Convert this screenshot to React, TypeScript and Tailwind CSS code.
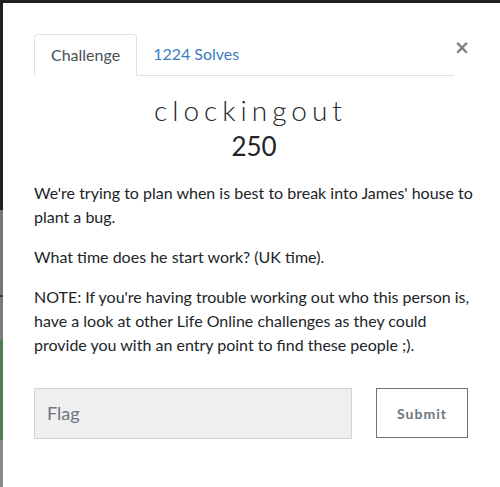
import React from "react";

export default function App() {
  return (
    <div className="flex h-[487px] w-[500px] overflow-hidden bg-[#1d2124]" style={{ fontFamily: "Lato, 'Noto Sans', sans-serif" }}>
      <div className="flex w-[3px] shrink-0 flex-col">
        <div className="h-[210px] bg-[#1d2124]" />
        <div className="h-[85px] bg-[#767676]" />
        <div className="h-[2px] bg-[#3a3a3a]" />
        <div className="h-[43px] bg-[#7a7a7a]" />
        <div className="h-[100px] bg-[#4f7d50]" />
        <div className="flex-1 bg-[#8a8a8a]" />
      </div>
      <div className="flex flex-1 flex-col">
        <div className="h-[3px] bg-[#1d2124]" />
        <div className="flex-1 bg-white pl-[31px] pr-[26px] pt-[31px]">
          <div className="flex items-start pr-[8px]">
            <div className="flex flex-1 border-b border-[#dee2e6]">
              <div className="-mb-px rounded-t-[4px] border border-b-white border-[#dee2e6] bg-white px-4 py-2 text-[16px] leading-[24px] text-[#495057]">
                Challenge
              </div>
              <div className="px-4 py-2 text-[16px] leading-[24px] text-[#3b7dbf]">1224 Solves</div>
            </div>
            <div className="w-[12px] pt-[3px] text-center text-[19px] font-bold leading-[20px] text-[#808080]" style={{ fontFamily: "'DejaVu Sans', sans-serif" }}>
              ×
            </div>
          </div>
          <div className="mt-[16px] pr-[7px] text-center text-[28px] font-light leading-[36px] tracking-[5px] text-[#212529]">
            clockingout
          </div>
          <div className="mt-[1px] text-center text-[26px] leading-[34px] text-[#212529]">250</div>
          <div className="mt-[18px] text-[16px] leading-[24px] text-[#212529]">
            <p className="mb-4">We're trying to plan when is best to break into James' house to plant a bug.</p>
            <p className="mb-4">What time does he start work? (UK time).</p>
            <p className="mb-4">
              NOTE: If you're having trouble working out who this person is, have a look at other Life Online challenges as they could provide you with an entry point to find these people ;).
            </p>
          </div>
          <div className="mt-[31px] flex items-start gap-[24px]">
            <div className="flex h-[51px] w-[318px] items-center border border-[#ced4da] bg-[#efefef] px-[12px] text-[18px] text-[#6c757d]">
              Flag
            </div>
            <div className="flex h-[50px] w-[92px] items-center justify-center border border-[#6c757d] text-[14px] font-bold tracking-[1px] text-[#6c757d]">
              Submit
            </div>
          </div>
        </div>
      </div>
    </div>
  );
}
